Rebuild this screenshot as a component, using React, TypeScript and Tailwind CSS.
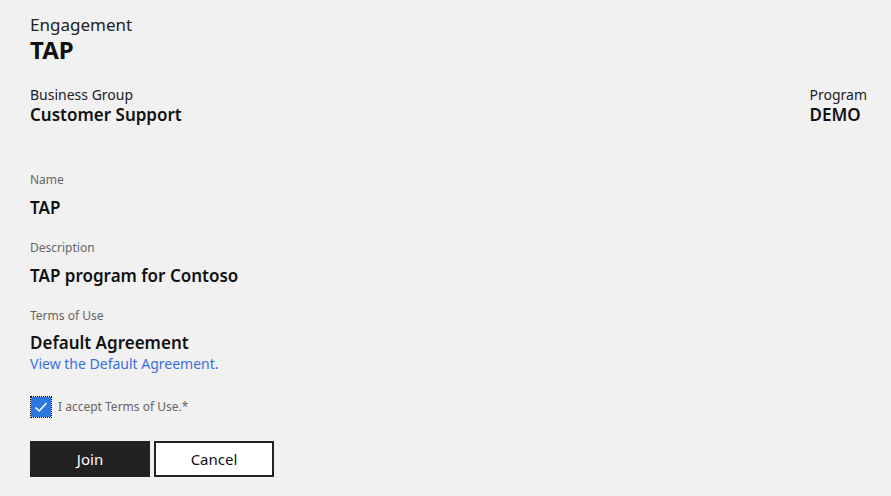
import React from "react";

export default function App() {
  return (
    <div
      className="min-h-[496px] w-full bg-[#f1f1f1] text-[#111] pl-[30px] pr-[24px] pt-[14px]"
      style={{ fontFamily: '"Noto Sans", "Open Sans", sans-serif' }}
    >
      <div className="text-[17px] leading-[22px] text-[#222]">Engagement</div>
      <div className="text-[24px] leading-[28px] font-bold">TAP</div>

      <div className="mt-[21px] flex justify-between">
        <div>
          <div className="text-[14px] leading-[19px] text-[#222]">Business Group</div>
          <div className="text-[17px] leading-[22px] font-semibold">Customer Support</div>
        </div>
        <div>
          <div className="text-[14px] leading-[19px] text-[#222]">Program</div>
          <div className="text-[17px] leading-[22px] font-semibold">DEMO</div>
        </div>
      </div>

      <div className="mt-[46px]">
        <div className="text-[12px] leading-[16px] text-[#666]">Name</div>
        <div className="mt-[8px] text-[17px] leading-[24px] font-semibold">TAP</div>
      </div>

      <div className="mt-[20px]">
        <div className="text-[12px] leading-[16px] text-[#666]">Description</div>
        <div className="mt-[8px] text-[17px] leading-[24px] font-semibold">TAP program for Contoso</div>
      </div>

      <div className="mt-[20px]">
        <div className="text-[12px] leading-[16px] text-[#666]">Terms of Use</div>
        <div className="mt-[8px] text-[17px] leading-[22px] font-semibold">Default Agreement</div>
        <a href="#" className="block mt-[1px] text-[14px] leading-[18px] text-[#3a6fe0]">
          View the Default Agreement.
        </a>
      </div>

      <label className="mt-[23px] flex items-center gap-[6px]">
        <span className="flex h-[22px] w-[22px] items-center justify-center border border-dotted border-black">
          <span className="flex h-[20px] w-[20px] items-center justify-center bg-[#2f77e0]">
            <svg width="16" height="16" viewBox="0 0 16 16" fill="none">
              <path d="M2.5 8.5 L6.2 12 L13.5 4" stroke="white" strokeWidth="1.5" />
            </svg>
          </span>
        </span>
        <span className="text-[12px] leading-[16px] text-[#666]">I accept Terms of Use.*</span>
      </label>

      <div className="mt-[23px] flex gap-[4px]">
        <button className="h-[36px] w-[120px] bg-[#222] text-[15px] text-white">Join</button>
        <button className="h-[36px] w-[120px] border-2 border-[#222] bg-white text-[15px] text-[#111]">
          Cancel
        </button>
      </div>
    </div>
  );
}
